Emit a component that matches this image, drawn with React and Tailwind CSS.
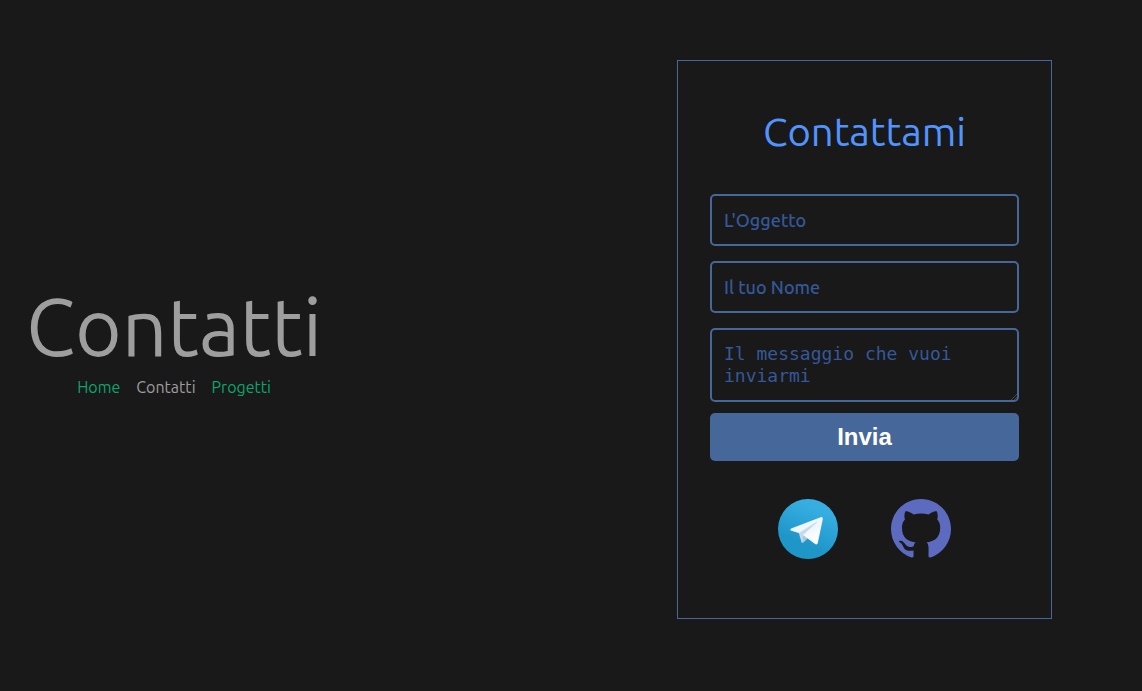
const fieldClass =
  "block w-full rounded-[5px] border-2 border-[#456799] bg-transparent px-3 text-lg text-[#5294ff] outline-none placeholder:text-[#345899] placeholder:opacity-100 focus:border-[#5294ff]";

function TelegramIcon() {
  return (
    <svg viewBox="0 0 240 240" className="size-[60px]" aria-hidden="true">
      <defs>
        <linearGradient id="tg-sky" x1=".667" y1=".167" x2=".417" y2=".75">
          <stop stopColor="#37aee2" offset="0" />
          <stop stopColor="#1e96c8" offset="1" />
        </linearGradient>
        <linearGradient id="tg-plane" x1=".66" y1=".437" x2=".851" y2=".802">
          <stop stopColor="#eff7fc" offset="0" />
          <stop stopColor="#ffffff" offset="1" />
        </linearGradient>
      </defs>
      <circle cx="120" cy="120" r="120" fill="url(#tg-sky)" />
      <path fill="#c8daea" d="M98 175c-3.888 0-3.227-1.468-4.568-5.17L82 132.207 170 80" />
      <path fill="#a9c9dd" d="M98 175c3 0 4.325-1.372 6-3l16-15.558-19.958-12.035" />
      <path
        fill="url(#tg-plane)"
        d="M100.04 144.41l48.36 35.729c5.519 3.045 9.501 1.468 10.876-5.123l19.685-92.763c2.015-8.08-3.08-11.746-8.36-9.349l-115.59 44.571c-7.89 3.165-7.843 7.567-1.438 9.528l29.663 9.259 68.673-43.325c3.242-1.966 6.218-.91 3.776 1.258"
      />
    </svg>
  );
}

function GithubIcon() {
  return (
    <svg viewBox="0 0 16 16" className="size-[60px] fill-[#5c6bc0]" aria-hidden="true">
      <path d="M8 0C3.58 0 0 3.58 0 8c0 3.54 2.29 6.53 5.47 7.59.4.07.55-.17.55-.38 0-.19-.01-.82-.01-1.49-2.01.37-2.53-.49-2.69-.94-.09-.23-.48-.94-.82-1.13-.28-.15-.68-.52-.01-.53.63-.01 1.08.58 1.23.82.72 1.21 1.87.87 2.33.66.07-.52.28-.87.51-1.07-1.78-.2-3.64-.89-3.64-3.95 0-.87.31-1.59.82-2.15-.08-.2-.36-1.02.08-2.12 0 0 .67-.21 2.2.82.64-.18 1.32-.27 2-.27s1.36.09 2 .27c1.53-1.04 2.2-.82 2.2-.82.44 1.1.16 1.92.08 2.12.51.56.82 1.27.82 2.15 0 3.07-1.87 3.75-3.65 3.95.29.25.54.73.54 1.48 0 1.07-.01 1.93-.01 2.2 0 .21.15.46.55.38A8.01 8.01 0 0 0 16 8c0-4.42-3.58-8-8-8z" />
    </svg>
  );
}

function Intro() {
  return (
    <header className="flex flex-col items-center gap-[5px] pb-[3px]">
      <h1 className="text-[80px] leading-[92px] font-normal text-[#9e9e9e]">Contatti</h1>
      <nav className="flex gap-4 text-base leading-5 font-normal">
        <a href="#home" className="text-[#0aa56c]">Home</a>
        <a href="#contatti" aria-current="page" className="text-[#9e9e9e]">Contatti</a>
        <a href="#progetti" className="text-[#0aa56c]">Progetti</a>
      </nav>
    </header>
  );
}

function ContactCard() {
  return (
    <section className="w-full max-w-[375px] border border-[#456799] px-8 pt-12 pb-[59px]">
      <h2 className="text-center text-[40px] leading-[46px] font-normal text-[#5294ff]">Contattami</h2>
      <form className="mt-[39px]" onSubmit={(e) => e.preventDefault()}>
        <div className="flex flex-col gap-[15px]">
          <input type="text" aria-label="L'Oggetto" placeholder="L'Oggetto" className={`${fieldClass} h-[52px] font-medium`} />
          <input type="text" aria-label="Il tuo Nome" placeholder="Il tuo Nome" className={`${fieldClass} h-[52px] font-medium`} />
          <textarea
            rows={2}
            aria-label="Il messaggio che vuoi inviarmi"
            placeholder="Il messaggio che vuoi inviarmi"
            className={`${fieldClass} h-[74px] resize py-[13px] font-['DejaVu_Sans_Mono',monospace] leading-[22px] [&::-webkit-resizer]:bg-[linear-gradient(135deg,transparent_78%,#484848_78%,#484848_82%,transparent_82%,transparent_88%,#484848_88%,#484848_92%,transparent_92%)]`}
          />
        </div>
        <button
          type="submit"
          className="mt-[11px] h-12 w-full rounded-[5px] bg-[#456799] font-['Liberation_Sans',sans-serif] text-2xl font-bold text-white"
        >
          Invia
        </button>
      </form>
      <div className="mt-[38px] flex justify-center gap-[53px]">
        <a href="#telegram" aria-label="Telegram"><TelegramIcon /></a>
        <a href="#github" aria-label="GitHub"><GithubIcon /></a>
      </div>
    </section>
  );
}

export default function App() {
  return (
    <main className="flex min-h-screen flex-wrap items-center justify-between gap-10 bg-[#191919] pt-[60px] pr-[90px] pb-[72px] pl-[26px] font-['Ubuntu','Noto_Sans',sans-serif]">
      <Intro />
      <ContactCard />
    </main>
  );
}
